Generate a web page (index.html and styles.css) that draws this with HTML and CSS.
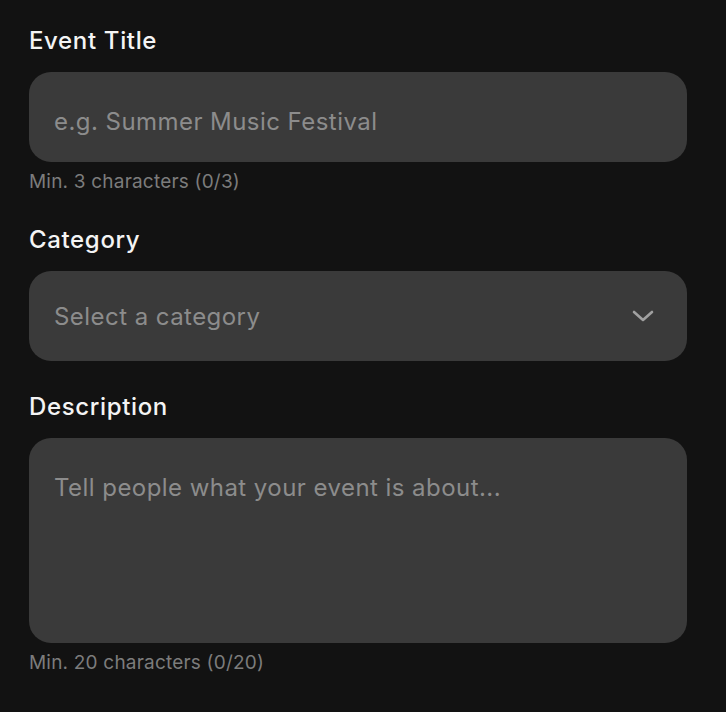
FILE: index.html
```html
<!DOCTYPE html>
<html lang="en">
<head>
  <meta charset="utf-8">
  <title>Create event</title>
  <link rel="stylesheet" href="styles.css">
</head>
<body>
  <form class="event-form">
    <div class="field">
      <label class="field-label" for="title">Event Title</label>
      <input class="field-input field-text" id="title" type="text" placeholder="e.g. Summer Music Festival">
      <p class="field-hint">Min. 3 characters (0/3)</p>
    </div>
    <div class="field">
      <label class="field-label" for="category">Category</label>
      <div class="select-wrap">
        <select class="field-input field-select" id="category">
          <option value="" selected>Select a category</option>
          <option>Music</option>
          <option>Sports</option>
          <option>Art</option>
        </select>
        <svg class="chevron" width="22" height="12" viewBox="0 0 22 12">
          <path d="M2 2 L11 10 L20 2" fill="none" stroke="#a0a0a0" stroke-width="2.6" stroke-linecap="round" stroke-linejoin="round"/>
        </svg>
      </div>
    </div>
    <div class="field">
      <label class="field-label" for="description">Description</label>
      <textarea class="field-input field-area" id="description" placeholder="Tell people what your event is about..."></textarea>
      <p class="field-hint">Min. 20 characters (0/20)</p>
    </div>
  </form>
</body>
</html>
```

FILE: styles.css
```css
html, body {
  margin: 0;
  padding: 0;
}
body {
  background-color: #121212;
  font-family: 'Inter', 'Noto Sans', sans-serif;
  color: #f4f4f4;
  min-height: 100vh;
}
.event-form {
  padding: 27px 39px 0 29px;
  display: flex;
  flex-direction: column;
  gap: 32px;
}
.field {
  display: flex;
  flex-direction: column;
}
.field-label {
  font-size: 24px;
  line-height: 28px;
  font-weight: 500;
  letter-spacing: 0.65px;
  color: #f4f4f4;
  margin-bottom: 17px;
}
.field-input {
  box-sizing: border-box;
  width: 100%;
  height: 90px;
  border: 0;
  outline: none;
  border-radius: 22px;
  background-color: #3a3a3a;
  padding: 0 25px;
  font-family: inherit;
  font-size: 24px;
  letter-spacing: 0.45px;
  color: #f4f4f4;
}
.field-input::placeholder {
  color: #8c8c8c;
}
.field-text {
  padding-top: 8px;
}
.select-wrap {
  position: relative;
}
.field-select {
  appearance: none;
  -webkit-appearance: none;
  color: #8c8c8c;
  display: block;
}
.chevron {
  position: absolute;
  right: 33px;
  top: 39px;
  pointer-events: none;
}
.field-area {
  height: 205px;
  padding-top: 36px;
  line-height: 28px;
  resize: none;
  display: block;
}
.field-hint {
  margin: 9px 0 1px;
  font-size: 19px;
  line-height: 22px;
  letter-spacing: 0.2px;
  color: #7c7c7c;
}
```
